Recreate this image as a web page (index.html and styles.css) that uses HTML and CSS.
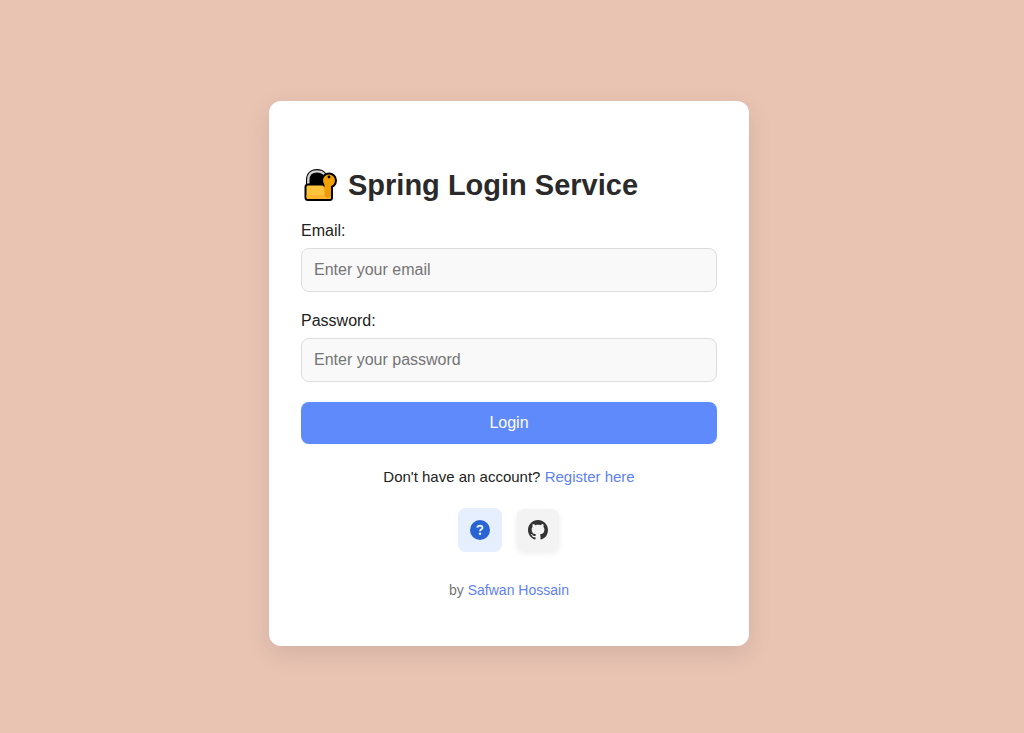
FILE: index.html
```html
<!DOCTYPE html>
<html lang="en">
<head>
  <meta charset="utf-8">
  <meta name="viewport" content="width=device-width, initial-scale=1">
  <title>Spring Login Service</title>
  <link rel="stylesheet" href="styles.css">
</head>
<body>
  <main class="card">
    <h1 class="title">
      <svg class="title-icon" viewBox="0 0 36 36" aria-hidden="true">
        <path d="M2 19V13C2 6 6.500 2 13 2S24 6 24 13V19Z" fill="#000"/>
        <path d="M4.300 18V13C4.300 7.300 7.800 4.400 13 4.400S21.700 7.300 21.700 13V18" fill="none" stroke="#d2d3d5" stroke-width="2.400"/>
        <rect x="1.500" y="17.500" width="26.500" height="15.500" rx="2.500" fill="#ffc43b" stroke="#000" stroke-width="2"/>
        <path d="M2.500 28h24v2q0 2-2 2h-20q-2 0-2-2Z" fill="#ffb62e"/>
        <path d="M20.500 19h6.500v10l-3 2.500-3.500-2.500Z" fill="#eb9a0c"/>
        <circle cx="25" cy="13.500" r="7" fill="#f2a000" stroke="#000" stroke-width="2"/>
        <path d="M20.500 16h6.500v8h-6.500Z" fill="#f2a000"/>
        <circle cx="25" cy="10" r="1.400" fill="#000"/>
      </svg>
      Spring Login Service
    </h1>
    <form class="form">
      <label class="label" for="email">Email:</label>
      <input class="field" id="email" type="email" placeholder="Enter your email">
      <label class="label" for="password">Password:</label>
      <input class="field" id="password" type="password" placeholder="Enter your password">
      <button class="login" type="submit">Login</button>
    </form>
    <p class="register">Don't have an account? <a class="link" href="#register">Register here</a></p>
    <nav class="tools">
      <a class="tool tool-help" href="#help" aria-label="Help">
        <svg class="tool-icon" viewBox="0 0 20 20" aria-hidden="true">
          <circle cx="10" cy="10" r="10" fill="#2864d2"/>
          <path d="M7.300 7.600C7.500 6.100 8.500 5.700 10 5.700C11.600 5.700 12.500 6.400 12.500 7.700C12.500 9.300 10 9.200 10 11.300" fill="none" stroke="#e5efff" stroke-width="1.900"/>
          <circle cx="10" cy="13.700" r="1.250" fill="#e5efff"/>
        </svg>
      </a>
      <a class="tool tool-github" href="#github" aria-label="GitHub">
        <svg class="tool-icon" viewBox="0 0 16 16" aria-hidden="true">
          <path fill="#333" d="M8 0C3.58 0 0 3.58 0 8c0 3.54 2.29 6.53 5.47 7.59.4.07.55-.17.55-.38 0-.19-.01-.82-.01-1.49-2.01.37-2.53-.49-2.69-.94-.09-.23-.48-.94-.82-1.13-.28-.15-.68-.52-.01-.53.63-.01 1.08.58 1.23.82.72 1.21 1.87.87 2.33.66.07-.52.28-.87.51-1.07-1.78-.2-3.64-.89-3.64-3.95 0-.87.31-1.59.82-2.15-.08-.2-.36-1.02.08-2.12 0 0 .67-.21 2.2.82.64-.18 1.32-.27 2-.27s1.36.09 2 .27c1.53-1.04 2.2-.82 2.2-.82.44 1.1.16 1.92.08 2.12.51.56.82 1.27.82 2.15 0 3.07-1.87 3.75-3.65 3.95.29.25.54.73.54 1.48 0 1.07-.01 1.93-.01 2.2 0 .21.15.46.55.38A8.01 8.01 0 0 0 16 8c0-4.42-3.58-8-8-8Z"/>
        </svg>
      </a>
    </nav>
    <footer class="footer">by <a class="link" href="#author">Safwan Hossain</a></footer>
  </main>
</body>
</html>
```
FILE: styles.css
```css
* {
  box-sizing: border-box;
}

body {
  display: flex;
  align-items: center;
  justify-content: center;
  min-height: 100vh;
  margin: 0;
  padding: 14px 6px 0 0;
  background: #e9c4b3;
  color: #222;
  font: 16px/20px "Liberation Sans", Arial, sans-serif;
}

.card {
  width: 100%;
  max-width: 480px;
  padding: 64px 32px 46px;
  border-radius: 12px;
  background: #fff;
  box-shadow: 0 8px 24px rgba(0, 0, 0, 0.1);
}

.title {
  display: flex;
  align-items: center;
  gap: 8px;
  margin: 0 0 16px;
  padding-left: 3px;
  color: #2a2a2a;
  font-size: 29px;
  line-height: 40px;
}

.title-icon {
  width: 36px;
  height: 36px;
  flex: none;
}

.form {
  display: flex;
  flex-direction: column;
}

.label {
  margin-bottom: 7px;
}

.field {
  width: 100%;
  height: 44px;
  margin: 0 0 19px;
  padding: 0 12px;
  border: 1px solid #ddd;
  border-radius: 8px;
  background: #f9f9f9;
  color: #222;
  font: inherit;
}

.field::placeholder {
  color: #757575;
}

.login {
  height: 42px;
  margin-top: 1px;
  padding: 0 12px;
  border: 0;
  border-radius: 8px;
  background: #5e8afb;
  color: #fff;
  font: inherit;
  cursor: pointer;
}

.register {
  margin: 23px 0 21px;
  font-size: 15px;
  text-align: center;
}

.link {
  color: #5e81f4;
  text-decoration: none;
}

.tools {
  display: flex;
  align-items: center;
  justify-content: center;
  gap: 16px;
}

.tool {
  display: flex;
  align-items: center;
  justify-content: center;
  width: 42px;
  height: 42px;
  border-radius: 8px;
}

.tool-help {
  width: 44px;
  height: 44px;
  margin: 0 -1px;
  background: #e5efff;
}

.tool-github {
  background: #f3f3f3;
  box-shadow: 0 2px 6px rgba(0, 0, 0, 0.08);
}

.tool-icon {
  width: 20px;
  height: 20px;
}

.footer {
  margin-top: 28px;
  color: #777;
  font-size: 14px;
  text-align: center;
}
```
